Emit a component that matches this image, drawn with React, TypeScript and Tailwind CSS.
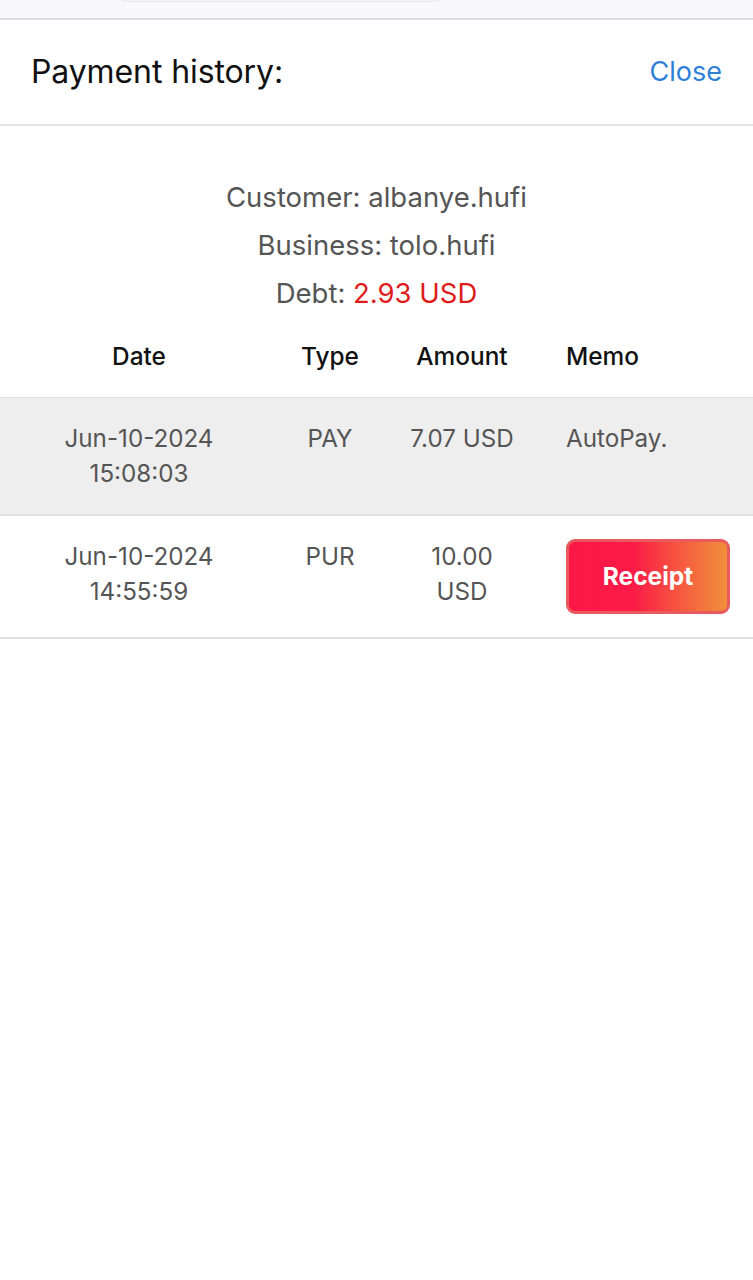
import React from "react";

const rows = [
  { date: "Jun-10-2024", time: "15:08:03", type: "PAY", amount: ["7.07 USD"], memo: "AutoPay.", bg: "bg-[#eeeeee]" },
  { date: "Jun-10-2024", time: "14:55:59", type: "PUR", amount: ["10.00", "USD"], memo: null, bg: "bg-white" },
];

export default function App() {
  return (
    <div className="w-[753px] h-[1280px] bg-white overflow-hidden" style={{ fontFamily: "Inter, 'Noto Sans', sans-serif" }}>
      {/* top strip */}
      <div className="h-[20px] bg-[#f9f9fc] border-b-2 border-[#dcdde1] relative overflow-hidden">
        <div className="absolute left-[108px] top-[-40px] w-[346px] h-[42px] rounded-full bg-[#f3f4f8] border border-[#e8e9ee]" />
      </div>
      {/* header */}
      <div className="h-[106px] flex items-center justify-between pl-[31px] pr-[31px] border-b-2 border-[#e4e4e4]">
        <div className="text-[32px] text-[#111111] tracking-[-0.1px]">Payment history:</div>
        <div className="text-[27px] text-[#2f7fd8]">Close</div>
      </div>
      {/* info */}
      <div className="pt-[47px] flex flex-col items-center text-[27.5px] leading-[48px] text-[#555555]">
        <div>Customer: albanye.hufi</div>
        <div>Business: tolo.hufi</div>
        <div>
          Debt: <span className="text-[#e01b1b]">2.93 USD</span>
        </div>
      </div>
      {/* table */}
      <div className="mt-[22px]">
        <div className="grid grid-cols-[278px_104px_160px_1fr] text-[24.4px] leading-[35px] font-medium text-[#111111] pb-[23px] border-b border-[#dddddd]">
          <div className="text-center">Date</div>
          <div className="text-center">Type</div>
          <div className="text-center">Amount</div>
          <div className="pl-[24px]">Memo</div>
        </div>
        {rows.map((r, i) => (
          <div
            key={i}
            className={`grid grid-cols-[278px_104px_160px_1fr] text-[24.2px] leading-[35px] text-[#555555] py-[23px] border-b-2 border-[#e2e2e2] ${r.bg}`}
          >
            <div className="text-center">
              <div>{r.date}</div>
              <div>{r.time}</div>
            </div>
            <div className="text-center">{r.type}</div>
            <div className="text-center">
              {r.amount.map((a, j) => (
                <div key={j}>{a}</div>
              ))}
            </div>
            <div className="pl-[24px] pr-[23px]">
              {r.memo ? (
                <div>{r.memo}</div>
              ) : (
                <button className="w-full h-[75px] rounded-[9px] border-[3px] border-[#e85a5e] bg-[linear-gradient(90deg,#fc1747_0%,#fb1a47_40%,#f5623f_75%,#f0903a_100%)] text-white font-bold text-[24.5px]">
                  Receipt
                </button>
              )}
            </div>
          </div>
        ))}
      </div>
    </div>
  );
}
